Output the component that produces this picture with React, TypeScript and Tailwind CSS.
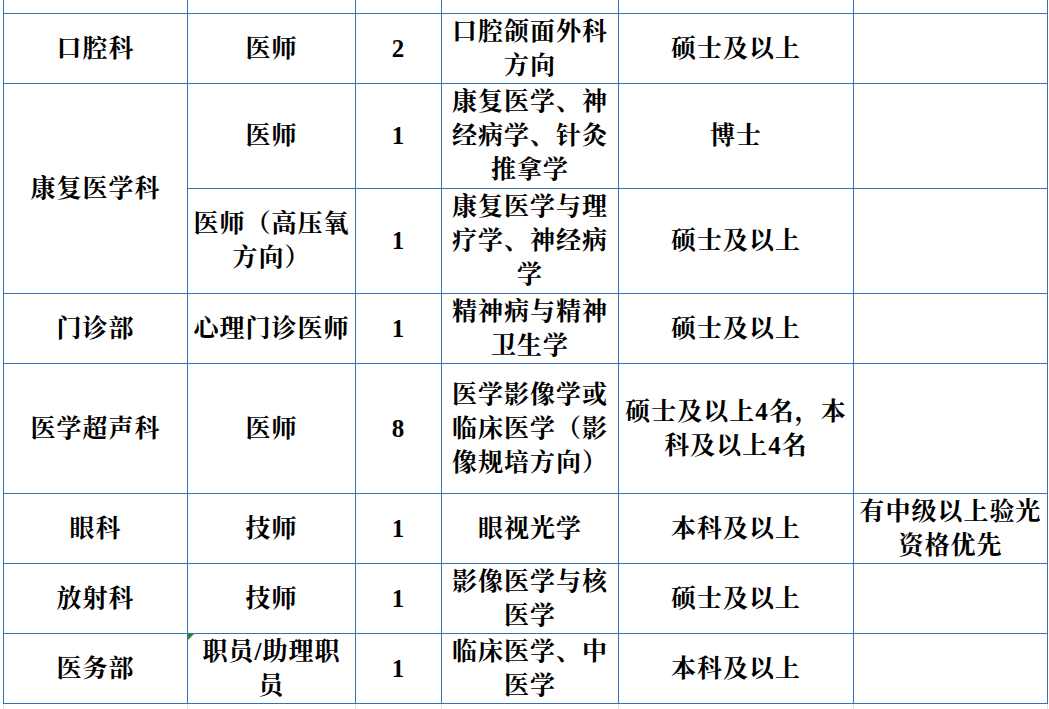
import React from 'react';

type Cell = {
  lines: string[];
  span?: boolean;
  mark?: boolean;
};

const rows: Cell[][] = [
  [{ lines: ['口腔科'] }, { lines: ['医师'] }, { lines: ['2'] }, { lines: ['口腔颌面外科', '方向'] }, { lines: ['硕士及以上'] }, { lines: [] }],
  [{ lines: ['康复医学科'], span: true }, { lines: ['医师'] }, { lines: ['1'] }, { lines: ['康复医学、神', '经病学、针灸', '推拿学'] }, { lines: ['博士'] }, { lines: [] }],
  [{ lines: ['医师（高压氧', '方向）'] }, { lines: ['1'] }, { lines: ['康复医学与理', '疗学、神经病', '学'] }, { lines: ['硕士及以上'] }, { lines: [] }],
  [{ lines: ['门诊部'] }, { lines: ['心理门诊医师'] }, { lines: ['1'] }, { lines: ['精神病与精神', '卫生学'] }, { lines: ['硕士及以上'] }, { lines: [] }],
  [{ lines: ['医学超声科'] }, { lines: ['医师'] }, { lines: ['8'] }, { lines: ['医学影像学或', '临床医学（影', '像规培方向）'] }, { lines: ['硕士及以上4名，本', '科及以上4名'] }, { lines: [] }],
  [{ lines: ['眼科'] }, { lines: ['技师'] }, { lines: ['1'] }, { lines: ['眼视光学'] }, { lines: ['本科及以上'] }, { lines: ['有中级以上验光', '资格优先'] }],
  [{ lines: ['放射科'] }, { lines: ['技师'] }, { lines: ['1'] }, { lines: ['影像医学与核', '医学'] }, { lines: ['硕士及以上'] }, { lines: [] }],
  [{ lines: ['医务部'] }, { lines: ['职员/助理职', '员'], mark: true }, { lines: ['1'] }, { lines: ['临床医学、中', '医学'] }, { lines: ['本科及以上'] }, { lines: [] }],
];

const TableCell: React.FC<{ cell: Cell }> = ({ cell }) => (
  <div
    className={`relative flex flex-col items-center justify-center bg-white text-center ${
      cell.span ? 'row-span-2' : ''
    }`}
  >
    {cell.mark && (
      <span className="absolute left-0 top-0 h-0 w-0 border-r-[6px] border-t-[6px] border-r-transparent border-t-[#1e8c2e]" />
    )}
    {cell.lines.map((line, i) => (
      <span key={i} className="whitespace-nowrap">
        {line}
      </span>
    ))}
  </div>
);

export default function App() {
  return (
    <div className="h-[709px] w-[1049px] overflow-hidden bg-white">
      <div
        className="ml-[3px] grid w-fit grid-cols-[183px_167px_85px_176px_234px_193px] grid-rows-[13px_69px_104px_104px_69px_129px_69px_69px_69px] gap-px bg-[#3a6fb2] px-px pb-px text-[25px] font-bold leading-[34px] tracking-[1px] text-black"
        style={{ fontFamily: '"Liberation Serif", "Noto Serif CJK SC", "Noto Sans CJK SC", serif' }}
      >
        {Array.from({ length: 6 }).map((_, i) => (
          <div key={`top-${i}`} className="bg-white" />
        ))}
        {rows.map((row, r) => row.map((cell, c) => <TableCell key={`${r}-${c}`} cell={cell} />))}
      </div>
      <div className="ml-[3px] grid h-[5px] w-fit grid-cols-[183px_167px_85px_176px_234px_193px] gap-px bg-[#e2e2e2] px-px">
        {Array.from({ length: 6 }).map((_, i) => (
          <div key={`bottom-${i}`} className="bg-white" />
        ))}
      </div>
    </div>
  );
}
